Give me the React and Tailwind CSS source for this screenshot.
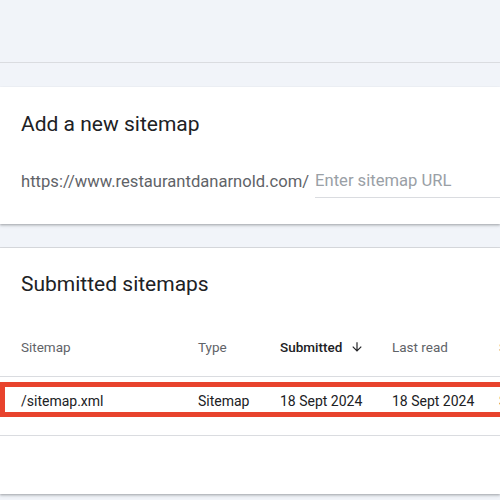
const cols = "grid grid-cols-[177px_82px_112px_105px_120px] pl-[21px]";

const App = () => {
  return (
    <div className="w-[500px] h-[500px] overflow-hidden bg-[#f1f4f9] font-['Roboto',sans-serif]">
      <div className="h-[63px] border-b border-[#dadce0]" />
      <div className="h-[24px]" />

      {/* add sitemap card */}
      <section className="h-[137px] bg-white shadow-[0_1px_2px_rgba(60,64,67,0.3),0_2px_3px_0_rgba(60,64,67,0.15)] pt-[23px] pl-[21px]">
        <h2 className="text-[21px] leading-[28px] text-[#202124]">Add a new sitemap</h2>
        <div className="mt-[28px] flex items-center h-[32px]">
          <span className="text-[16.6px] text-[#5f6368] whitespace-nowrap">
            https://www.restaurantdanarnold.com/
          </span>
          <div className="ml-[6px] flex-1 h-full border-b border-[#dadce0] flex items-center">
            <input
              className="w-full outline-none text-[16.6px] text-[#202124] placeholder:text-[#9aa0a6] bg-transparent"
              placeholder="Enter sitemap URL"
            />
          </div>
        </div>
      </section>

      <div className="h-[24px] border-b border-[#dadce0]" />

      {/* submitted sitemaps card */}
      <section className="h-[246px] bg-white shadow-[0_1px_2px_rgba(60,64,67,0.3),0_2px_3px_0_rgba(60,64,67,0.15)] pt-[22px]">
        <h2 className="pl-[21px] text-[21px] leading-[28px] text-[#202124]">Submitted sitemaps</h2>
        <div className={`${cols} h-[79px] items-end pb-[19px] border-b border-[#dadce0] text-[13.5px] leading-[20px] text-[#5f6368] whitespace-nowrap`}>
          <span>Sitemap</span>
          <span>Type</span>
          <span className="flex items-center gap-[8px] text-[#202124] font-medium">
            Submitted
            <svg width="14" height="14" viewBox="0 0 24 24" fill="#202124">
              <path d="M20 12l-1.41-1.41L13 16.17V4h-2v12.17l-5.58-5.59L4 12l8 8 8-8z" />
            </svg>
          </span>
          <span>Last read</span>
          <span className="pl-[2px]">Status</span>
        </div>
        <div className="relative h-[59px] border-b border-[#dadce0] pt-[14px]">
          <div className={`${cols} text-[14px] leading-[20px] text-[#202124] whitespace-nowrap`}>
            <span>/sitemap.xml</span>
            <span>Sitemap</span>
            <span>18 Sept 2024</span>
            <span>18 Sept 2024</span>
            <span className="pl-[2px]">Success</span>
          </div>
          <div className="absolute left-0 right-[-10px] top-[5px] h-[35px] border-[5px] border-[#e8432d]" />
        </div>
      </section>
    </div>
  );
};

export default App;
